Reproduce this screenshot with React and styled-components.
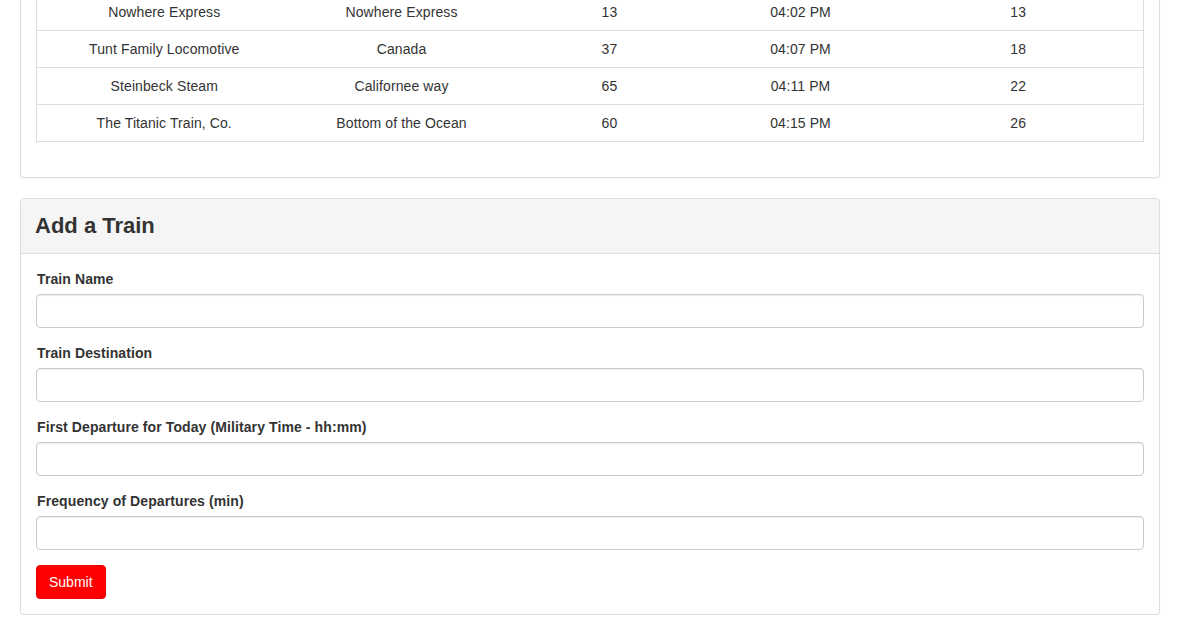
import React from "react";
import styled, { createGlobalStyle } from "styled-components";

const GlobalStyle = createGlobalStyle`
  html, body {
    margin: 0;
    padding: 0;
    background: #fff;
  }
  body {
    font-family: "Liberation Sans", Arial, Helvetica, sans-serif;
    font-size: 14px;
    line-height: 20px;
    color: #333;
    overflow: hidden;
  }
  * { box-sizing: border-box; }
`;

const Page = styled.div`
  width: 1140px;
  margin-left: 20px;
  display: flex;
  flex-direction: column;
  gap: 20px;
`;

const Panel = styled.div`
  background: #fff;
  border: 1px solid #ddd;
  border-top: ${(p) => (p.$cut ? "none" : "1px solid #ddd")};
  border-radius: ${(p) => (p.$cut ? "0 0 4px 4px" : "4px")};
  box-shadow: 0 1px 1px rgba(0, 0, 0, 0.05);
`;

const PanelHeading = styled.div`
  background: #f5f5f5;
  border-bottom: 1px solid #ddd;
  border-radius: 3px 3px 0 0;
  padding: 10px 15px 10px 14px;
`;

const PanelTitle = styled.h3`
  margin: 0;
  font-size: 22px;
  line-height: 34px;
  font-weight: 700;
  color: #333;
`;

const PanelBody = styled.div`
  padding: ${(p) => (p.$cut ? "0 15px 15px" : "15px")};
`;

const Table = styled.table`
  width: 1107px;
  border-collapse: collapse;
  table-layout: fixed;
  border-left: 1px solid #ddd;
  border-right: 1px solid #ddd;
  border-bottom: 1px solid #ddd;
  margin-bottom: 20px;
`;

const Row = styled.tr`
  border-top: ${(p) => (p.$cut ? "none" : "1px solid #ddd")};
`;

const Cell = styled.td`
  text-align: center;
  padding: ${(p) => (p.$cut ? "2px 8px 8px" : "8px")};
  line-height: 20px;
  white-space: nowrap;
  letter-spacing: 0.1px;
`;

const Form = styled.form`
  display: flex;
  flex-direction: column;
  align-items: flex-start;
`;

const FormGroup = styled.div`
  width: 100%;
  margin-bottom: 15px;
  display: flex;
  flex-direction: column;
`;

const Label = styled.label`
  font-weight: 700;
  font-size: 14px;
  line-height: 20px;
  margin-bottom: 5px;
  padding-left: 1px;
  letter-spacing: 0.1px;
`;

const Input = styled.input`
  width: 100%;
  height: 34px;
  padding: 6px 12px;
  font-family: inherit;
  font-size: 14px;
  color: #555;
  background: #fff;
  border: 1px solid #ccc;
  border-radius: 4px;
  box-shadow: inset 0 1px 1px rgba(0, 0, 0, 0.075);
  outline: none;
`;

const SubmitButton = styled.button`
  height: 34px;
  padding: 6px 12px;
  font-family: inherit;
  font-size: 14px;
  line-height: 20px;
  color: #fff;
  background: #ff0000;
  border: 1px solid #e60000;
  border-radius: 4px;
  cursor: pointer;
`;

const columns = [255, 220, 196, 186, 250];

const trains = [
  ["Nowhere Express", "Nowhere Express", "13", "04:02 PM", "13"],
  ["Tunt Family Locomotive", "Canada", "37", "04:07 PM", "18"],
  ["Steinbeck Steam", "Californee way", "65", "04:11 PM", "22"],
  ["The Titanic Train, Co.", "Bottom of the Ocean", "60", "04:15 PM", "26"],
];

const fields = [
  { id: "train-name", label: "Train Name" },
  { id: "train-destination", label: "Train Destination" },
  { id: "first-train", label: "First Departure for Today (Military Time - hh:mm)" },
  { id: "frequency", label: "Frequency of Departures (min)" },
];

export default function App() {
  return (
    <>
      <GlobalStyle />
      <Page>
        <Panel $cut>
          <PanelBody $cut>
            <Table>
              <colgroup>
                {columns.map((w, i) => (
                  <col key={i} style={{ width: w }} />
                ))}
              </colgroup>
              <tbody>
                {trains.map((row, i) => (
                  <Row key={i} $cut={i === 0}>
                    {row.map((c, j) => (
                      <Cell key={j} $cut={i === 0}>
                        {c}
                      </Cell>
                    ))}
                  </Row>
                ))}
              </tbody>
            </Table>
          </PanelBody>
        </Panel>

        <Panel>
          <PanelHeading>
            <PanelTitle>Add a Train</PanelTitle>
          </PanelHeading>
          <PanelBody>
            <Form onSubmit={(e) => e.preventDefault()}>
              {fields.map((f) => (
                <FormGroup key={f.id}>
                  <Label htmlFor={f.id}>{f.label}</Label>
                  <Input id={f.id} type="text" />
                </FormGroup>
              ))}
              <SubmitButton type="submit">Submit</SubmitButton>
            </Form>
          </PanelBody>
        </Panel>
      </Page>
    </>
  );
}
